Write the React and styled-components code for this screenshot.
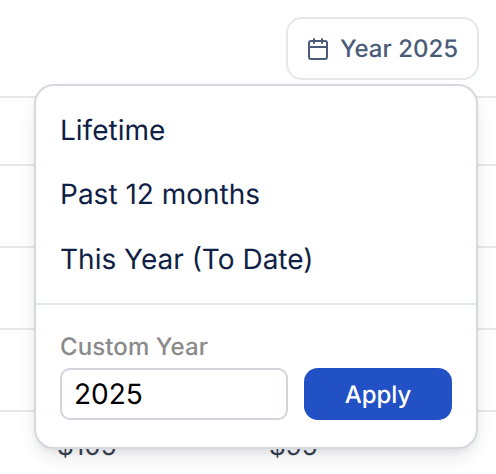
import React from "react";
import styled, { createGlobalStyle } from "styled-components";

const Global = createGlobalStyle`
  html, body { margin: 0; padding: 0; background: #fff; overflow: hidden; }
  body { font-family: Inter, "Liberation Sans", sans-serif; text-rendering: geometricPrecision; }
  * { box-sizing: border-box; }
`;
const Page = styled.div`
  position: relative;
  width: 496px;
  height: 474px;
  overflow: hidden;
`;
const Toolbar = styled.div`
  height: 96px;
  padding: 17px 17px 0 0;
  display: flex;
  justify-content: flex-end;
  align-items: flex-start;
`;
const RangeButton = styled.button`
  width: 193px;
  height: 63px;
  display: flex;
  align-items: center;
  justify-content: center;
  gap: 10px;
  background: #fff;
  border: 2px solid #e5e7eb;
  border-radius: 16px;
  color: #4a5b7a;
  font: 500 24px Inter, sans-serif;
  text-rendering: geometricPrecision;
  padding: 0 1px 0 0;
`;
const Row = styled.div`
  height: ${(p) => p.$h}px;
  border-top: 2px solid #e5e7eb;
  display: grid;
  grid-template-columns: 212px 1fr;
  padding: ${(p) => (p.$last ? "19px" : "0")} 0 0 57px;
  font-size: 26px;
  line-height: 32px;
  color: #374151;
`;
const Popover = styled.div`
  position: absolute;
  left: 34px;
  top: 84px;
  width: 444px;
  height: 365px;
  background: #fff;
  border: 2px solid #d5d8df;
  border-radius: 20px;
  box-shadow: 0 10px 20px -4px rgba(15, 23, 42, 0.12), 0 4px 8px -4px rgba(15, 23, 42, 0.1);
  display: flex;
  flex-direction: column;
`;
const Options = styled.div`
  height: 219px;
  padding-top: 11.6px;
  display: flex;
  flex-direction: column;
  border-bottom: 2px solid #e5e7eb;
`;
const Option = styled.div`
  height: 64.4px;
  display: flex;
  align-items: center;
  padding-left: 24px;
  color: #0f1f45;
  font-size: 28px;
`;
const Custom = styled.div`
  padding: 27px 24px 0;
  display: flex;
  flex-direction: column;
`;
const Label = styled.div`
  color: #8a8a8a;
  font-size: 24px;
  font-weight: 450;
  letter-spacing: 0.1px;
  line-height: 30px;
  margin-bottom: 6px;
`;
const Controls = styled.div`
  display: flex;
  gap: 16px;
`;
const YearInput = styled.input`
  width: 228px;
  height: 52px;
  border: 2px solid #d1d5db;
  border-radius: 10px;
  padding: 0 12px;
  font: 400 28px Inter, sans-serif;
  text-rendering: geometricPrecision;
  color: #000;
  background: #fff;
  outline: none;
`;
const Apply = styled.button`
  width: 148px;
  height: 52px;
  border: none;
  border-radius: 14px;
  background: #2251c5;
  color: #fff;
  font: 450 24px Inter, sans-serif;
  text-rendering: geometricPrecision;
`;

const CalendarIcon = () => (
  <svg width="24" height="24" viewBox="0 0 24 24" fill="none" stroke="currentColor" strokeWidth="2" strokeLinecap="round" strokeLinejoin="round">
    <path d="M8 2v4" />
    <path d="M16 2v4" />
    <rect x="3" y="4" width="18" height="18" rx="2" />
    <path d="M3 10h18" />
  </svg>
);

export default function App() {
  return (
    <Page>
      <Global />
      <Toolbar>
        <RangeButton>
          <CalendarIcon />
          Year 2025
        </RangeButton>
      </Toolbar>
      <Row $h={68} />
      <Row $h={82} />
      <Row $h={82} />
      <Row $h={82} />
      <Row $h={64} $last>
        <span>$105</span>
        <span>$95</span>
      </Row>
      <Popover>
        <Options>
          <Option>Lifetime</Option>
          <Option>Past 12 months</Option>
          <Option>This Year (To Date)</Option>
        </Options>
        <Custom>
          <Label>Custom Year</Label>
          <Controls>
            <YearInput defaultValue="2025" />
            <Apply>Apply</Apply>
          </Controls>
        </Custom>
      </Popover>
    </Page>
  );
}
